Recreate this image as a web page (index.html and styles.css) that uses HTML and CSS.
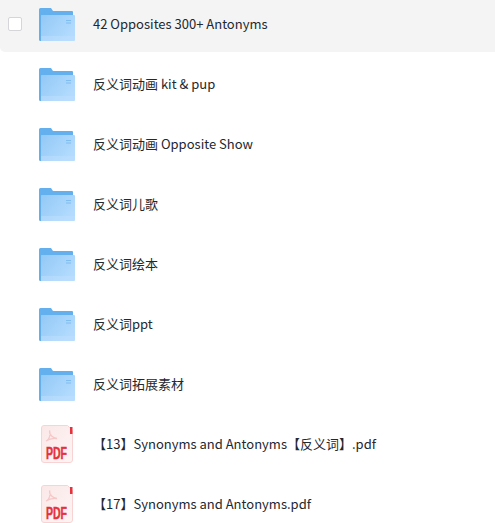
FILE: index.html
```html
<!DOCTYPE html>
<html lang="zh-CN">
<head>
    <meta charset="UTF-8">
    <meta name="viewport" content="width=device-width, initial-scale=1.0">
    <title>反义词</title>
    <link rel="stylesheet" href="styles.css">
</head>
<body>
    <svg class="defs" width="0" height="0">
        <defs>
            <linearGradient id="folderFront" x1="0" y1="0" x2="1" y2="0.6">
                <stop offset="0" stop-color="#93c9f6"/>
                <stop offset="1" stop-color="#b3dbfe"/>
            </linearGradient>
            <linearGradient id="pdfPaper" x1="0" y1="0" x2="1" y2="1">
                <stop offset="0" stop-color="#fbe8e8"/>
                <stop offset="1" stop-color="#fdf4f4"/>
            </linearGradient>
            <symbol id="folder" viewBox="0 0 36 33">
                <path d="M0 1.500Q0 0 1.500 0H12L14 3H33Q34 3 34 4V33H1.500Q0 33 0 31.500Z" fill="#64afee"/>
                <path d="M2 7.500Q2 7 2.500 7H35Q36 7 36 8V31.500Q36 33 34.500 33H2Z" fill="url(#folderFront)"/>
                <path d="M2 28H36V31.500Q36 33 34.500 33H2Z" fill="#bfe0fd" opacity="0.5"/>
                <path d="M27 12.500H32M27 15H32" stroke="#7fbcf0" stroke-width="1"/>
            </symbol>
            <symbol id="pdf" viewBox="0 0 32 38">
                <path d="M3 .5H26.500L31.500 5.500V35A2.500 2.500 0 0 1 29 37.500H3A2.500 2.500 0 0 1 .5 35V3A2.500 2.500 0 0 1 3 .5Z" fill="url(#pdfPaper)" stroke="#f9d3d3"/>
                <rect x="29" y="2" width="2.500" height="7" fill="#e6323c"/>
                <path d="M5.500 16C8 14.500 10 10 8.500 5.500C8 10 12 13 16 13.500C12 13 8.500 13.500 5 16" fill="none" stroke="#f6c8c8" stroke-width="1.300"/>
                <text class="pdf-label" x="5" y="34" textLength="21" lengthAdjust="spacingAndGlyphs">PDF</text>
            </symbol>
        </defs>
    </svg>

    <ul class="file-list">
        <li class="file-row file-row-active">
            <span class="check"></span>
            <svg class="icon-folder"><use href="#folder"/></svg>
            <span class="file-name">42 Opposites 300+ Antonyms</span>
        </li>
        <li class="file-row">
            <svg class="icon-folder"><use href="#folder"/></svg>
            <span class="file-name">反义词动画 kit &amp; pup</span>
        </li>
        <li class="file-row">
            <svg class="icon-folder"><use href="#folder"/></svg>
            <span class="file-name">反义词动画 Opposite Show</span>
        </li>
        <li class="file-row">
            <svg class="icon-folder"><use href="#folder"/></svg>
            <span class="file-name">反义词儿歌</span>
        </li>
        <li class="file-row">
            <svg class="icon-folder"><use href="#folder"/></svg>
            <span class="file-name">反义词绘本</span>
        </li>
        <li class="file-row">
            <svg class="icon-folder"><use href="#folder"/></svg>
            <span class="file-name">反义词ppt</span>
        </li>
        <li class="file-row">
            <svg class="icon-folder"><use href="#folder"/></svg>
            <span class="file-name">反义词拓展素材</span>
        </li>
        <li class="file-row">
            <svg class="icon-pdf"><use href="#pdf"/></svg>
            <span class="file-name">【13】Synonyms and Antonyms【反义词】.pdf</span>
        </li>
        <li class="file-row">
            <svg class="icon-pdf"><use href="#pdf"/></svg>
            <span class="file-name">【17】Synonyms and Antonyms.pdf</span>
        </li>
    </ul>
</body>
</html>
```

FILE: styles.css
```css
html, body {
    height: 100%;
}
body {
    margin: 0;
    overflow: hidden;
    background: #fff;
    font-family: "Noto Sans CJK SC", "Noto Sans", sans-serif;
    font-size: 13px;
    color: #23272f;
}
.defs {
    display: block;
    height: 0;
}
.file-list {
    list-style: none;
    margin: 0;
    padding: 0;
}
.file-row {
    display: flex;
    align-items: center;
    height: 60px;
    padding-left: 39px;
}
.file-row-active {
    height: 48px;
    padding-bottom: 4px;
    margin-bottom: 2px;
    background: #f4f4f4;
    border-bottom-left-radius: 5px;
}
.check {
    box-sizing: border-box;
    width: 14px;
    height: 14px;
    margin-left: -31px;
    margin-right: 17px;
    background: #fff;
    border: 1px solid #d5d5da;
    border-radius: 2px;
}
.icon-folder {
    width: 36px;
    height: 33px;
    margin-right: 18px;
}
.icon-pdf {
    width: 32px;
    height: 38px;
    margin-left: 2px;
    margin-right: 20px;
}
.pdf-label {
    font-family: "Liberation Sans", sans-serif;
    font-size: 16px;
    font-weight: bold;
    fill: #e6323c;
    stroke: #e6323c;
    stroke-width: 0.5px;
}
.file-name {
    white-space: nowrap;
    padding-bottom: 2px;
}
```
